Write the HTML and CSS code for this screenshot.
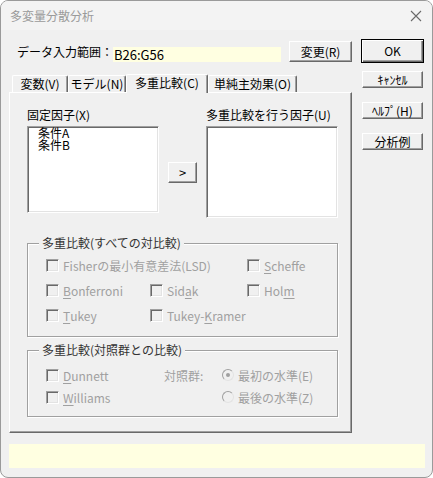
FILE: index.html
```html
<!DOCTYPE html>
<html lang="ja">
<head>
    <meta charset="UTF-8">
    <title>多変量分散分析</title>
    <link rel="stylesheet" href="styles.css">
</head>
<body>
    <div class="window">
        <div class="titlebar">
            <span>多変量分散分析</span>
            <svg class="close" width="12" height="12" viewBox="0 0 12 12">
                <path d="M1 1 L11 11 M11 1 L1 11" stroke="#6a6a6a" stroke-width="1.1" fill="none"/>
            </svg>
        </div>

        <div class="content">
            <div class="left">
                <div class="range-row">
                    <span class="range-label">データ入力範囲：</span>
                    <span class="range-input">B26:G56</span>
                    <button class="btn change-btn">変更(R)</button>
                </div>

                <div class="tabs">
                    <div class="tab tab-1">変数(V)</div>
                    <div class="tab tab-2">モデル(N)</div>
                    <div class="tab tab-active">多重比較(C)</div>
                    <div class="tab tab-4">単純主効果(O)</div>
                </div>

                <div class="panel">
                    <div class="lists">
                        <div>
                            <div class="list-label">固定因子(X)</div>
                            <div class="listbox listbox-left">
                                <div>条件A</div>
                                <div>条件B</div>
                            </div>
                        </div>
                        <div class="move-col">
                            <button class="btn move-btn">&gt;</button>
                        </div>
                        <div>
                            <div class="list-label">多重比較を行う因子(U)</div>
                            <div class="listbox listbox-right"></div>
                        </div>
                    </div>

                    <!-- すべての対比較 -->
                    <div class="group group-all">
                        <div class="group-title">多重比較(すべての対比較)</div>
                        <div class="group-grid grid-all">
                            <div class="opt opt-wide"><span class="check"></span>Fisherの最小有意差法(LSD)</div>
                            <div class="opt"><span class="check"></span><u>S</u>cheffe</div>
                            <div class="opt"><span class="check"></span><u>B</u>onferroni</div>
                            <div class="opt"><span class="check"></span>Sid<u>a</u>k</div>
                            <div class="opt"><span class="check"></span>Hol<u>m</u></div>
                            <div class="opt"><span class="check"></span><u>T</u>ukey</div>
                            <div class="opt"><span class="check"></span>Tukey-<u>K</u>ramer</div>
                        </div>
                    </div>

                    <!-- 対照群との比較 -->
                    <div class="group group-ctrl">
                        <div class="group-title">多重比較(対照群との比較)</div>
                        <div class="group-grid grid-ctrl">
                            <div class="opt"><span class="check"></span><u>D</u>unnett</div>
                            <div class="opt">対照群:</div>
                            <div class="opt"><span class="radio on"></span>最初の水準(E)</div>
                            <div class="opt"><span class="check"></span><u>W</u>illiams</div>
                            <div></div>
                            <div class="opt"><span class="radio"></span>最後の水準(Z)</div>
                        </div>
                    </div>
                </div>
            </div>

            <div class="side">
                <button class="btn btn-default">OK</button>
                <button class="btn side-btn">ｷｬﾝｾﾙ</button>
                <button class="btn side-btn">ﾍﾙﾌﾟ(H)</button>
                <button class="btn side-btn">分析例</button>
            </div>

            <div class="status-bar"></div>
        </div>
    </div>
</body>
</html>
```

FILE: styles.css
```css
* {
    margin: 0;
    padding: 0;
    box-sizing: border-box;
    font-family: "Noto Sans CJK JP", "Noto Sans", sans-serif;
}

body {
    background-color: #ffffff;
}

.window {
    width: 433px;
    height: 478px;
    border: 1px solid #9a9a9a;
    border-radius: 8px;
    background-color: #f0f0f0;
    overflow: hidden;
    font-size: 12px;
    color: #000;
}

.titlebar {
    height: 29px;
    display: flex;
    justify-content: space-between;
    align-items: center;
    padding: 0 10px 0 9px;
    background-color: #f3f3f3;
    color: #9a9a9a;
    font-size: 12px;
}

.content {
    display: grid;
    grid-template-columns: 343px 63px;
    column-gap: 9px;
    padding: 9px 8px 0 8px;
}

/* range row */
.range-row {
    display: flex;
    align-items: flex-start;
    height: 24px;
}

.range-label {
    width: 104px;
    padding-left: 8px;
    margin-top: 6px;
    line-height: 14px;
}

.range-input {
    width: 168px;
    height: 15px;
    margin-top: 8px;
    background-color: #ffffe1;
    font-size: 13px;
    line-height: 15px;
    padding-left: 1px;
}

.btn {
    background-color: #f0f0f0;
    border: 1px solid;
    border-color: #ffffff #696969 #696969 #ffffff;
    box-shadow: inset -1px -1px 0 #a0a0a0;
    font-size: 12px;
    line-height: 1;
    color: #000;
}

.change-btn {
    width: 63px;
    height: 21px;
    margin: 2px 0 0 8px;
}

/* tabs */
.tabs {
    display: flex;
    align-items: flex-end;
    height: 19px;
    margin-top: 11px;
    margin-bottom: -1px;
    padding-left: 3px;
}

.tab {
    height: 17px;
    margin-bottom: 1px;
    border-top: 1px solid #ffffff;
    border-left: 1px solid #ffffff;
    border-right: 1px solid #696969;
    box-shadow: inset -1px 0 0 #a0a0a0;
    border-radius: 2px 2px 0 0;
    line-height: 15px;
    text-align: center;
    background-color: #f0f0f0;
}

.tab-1 { width: 56px; }
.tab-2 { width: 58px; }
.tab-4 { width: 89px; }

.tab-active {
    width: 82px;
    height: 19px;
    margin-bottom: 0;
    position: relative;
    z-index: 1;
    line-height: 16px;
}

.panel {
    height: 341px;
    border-top: 1px solid #ffffff;
    border-left: 1px solid #ffffff;
    border-right: 1px solid #696969;
    border-bottom: 1px solid #696969;
    box-shadow: inset -1px -1px 0 #a0a0a0;
    padding: 15px 0 0 17px;
}

/* list boxes */
.lists {
    display: grid;
    grid-template-columns: 132px 47px 132px;
}

.list-label {
    line-height: 14px;
    margin-bottom: 4px;
    white-space: nowrap;
}

.listbox {
    background-color: #ffffff;
    border: 1px solid;
    border-color: #a0a0a0 #ffffff #ffffff #a0a0a0;
    box-shadow: inset 1px 1px 0 #696969, inset -1px -1px 0 #e3e3e3;
    padding: 0 0 0 10px;
    line-height: 12px;
}

.listbox-left { height: 87px; }
.listbox-right { height: 92px; }

.move-col {
    display: flex;
    justify-content: center;
}

.move-btn {
    width: 29px;
    height: 21px;
    margin-top: 54px;
    font-size: 13px;
}

/* group boxes */
.group {
    width: 311px;
    border: 1px solid #a0a0a0;
    box-shadow: inset 1px 1px 0 #ffffff, 1px 1px 0 #ffffff;
    padding-left: 18px;
}

.group-title {
    width: fit-content;
    margin: -8px 0 3px -7px;
    padding: 0 3px;
    background-color: #f0f0f0;
    line-height: 14px;
    color: #333;
}

.group-all {
    margin-top: 25px;
    height: 94px;
}

.group-ctrl {
    margin-top: 13px;
    height: 67px;
}

.group-ctrl .group-title {
    margin-bottom: 7px;
}

.group-grid {
    display: grid;
    color: #a0a0a0;
}

.grid-all {
    grid-template-columns: 104px 97px 1fr;
    grid-auto-rows: 25px;
}

.grid-ctrl {
    grid-template-columns: 118px 58px 1fr;
    grid-auto-rows: 22px;
}

.opt {
    display: flex;
    align-items: center;
    white-space: nowrap;
}

.opt-wide {
    grid-column: span 2;
}

.opt u {
    text-underline-offset: 2px;
}

.check {
    width: 13px;
    height: 13px;
    margin-right: 4px;
    border: 1px solid;
    border-color: #a0a0a0 #ffffff #ffffff #a0a0a0;
    box-shadow: inset 1px 1px 0 #696969, inset -1px -1px 0 #e3e3e3;
    background-color: #f0f0f0;
}

.radio {
    width: 12px;
    height: 12px;
    margin-right: 4px;
    border-radius: 50%;
    border: 1px solid;
    border-color: #a0a0a0 #e3e3e3 #e3e3e3 #a0a0a0;
    background-color: #f0f0f0;
    display: flex;
    justify-content: center;
    align-items: center;
}

.radio.on::after {
    content: "";
    width: 4px;
    height: 4px;
    border-radius: 50%;
    background-color: #a0a0a0;
}

/* side buttons */
.side {
    display: flex;
    flex-direction: column;
    gap: 14px;
}

.btn-default {
    height: 24px;
    margin-bottom: -6px;
    border: 1px solid #000;
    box-shadow: inset 1px 1px 0 #ffffff, inset -1px -1px 0 #696969, inset -2px -2px 0 #a0a0a0;
}

.side-btn {
    width: 61px;
    height: 17px;
    margin-left: 1px;
}

.status-bar {
    grid-column: span 2;
    width: 416px;
    height: 24px;
    margin-top: 11px;
    background-color: #ffffe1;
}
```
